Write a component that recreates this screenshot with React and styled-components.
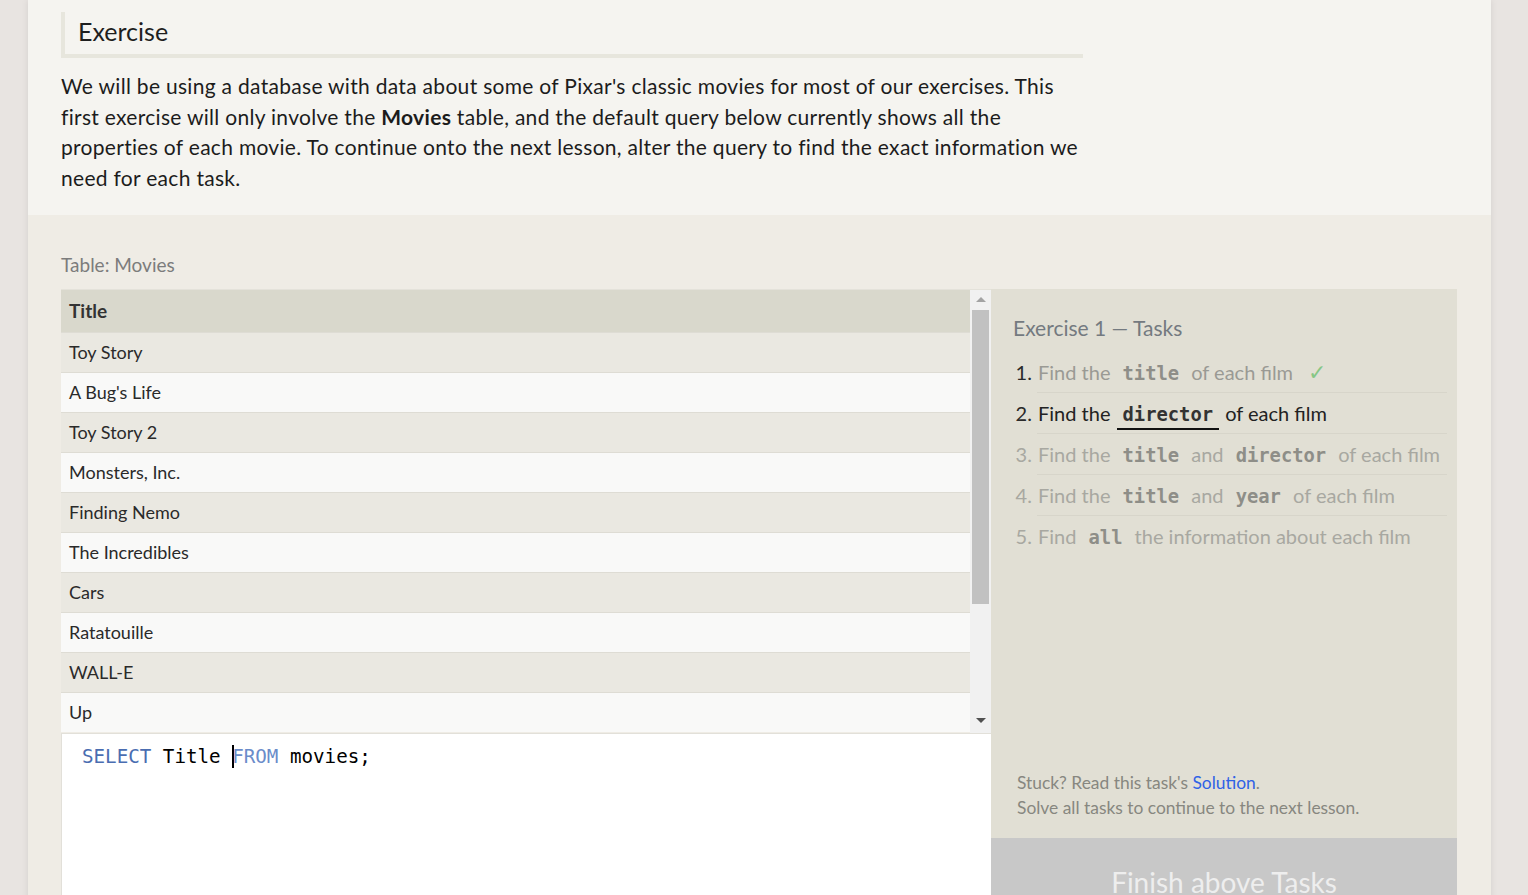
import React from 'react';
import styled, { createGlobalStyle } from 'styled-components';

const Global = createGlobalStyle`
  html, body {
    margin: 0;
    padding: 0;
    background: #e8e4e1;
    font-family: Lato, "Noto Sans", sans-serif;
    color: #222;
  }
`;

const Page = styled.div`
  width: 1463px;
  margin-left: 28px;
  box-shadow: 0 0 7px rgba(0, 0, 0, 0.09);
`;

const Intro = styled.section`
  background: #f5f4f0;
  padding: 12px 33px 21px;
`;

const Heading = styled.h2`
  margin: 0;
  width: 1005px;
  height: 42px;
  padding-left: 13px;
  border-left: 4px solid #e7e6dd;
  border-bottom: 4px solid #e7e6dd;
  font-size: 25px;
  font-weight: 400;
  line-height: 38px;
  color: #1e1e1e;
`;

const Lead = styled.p`
  margin: 13px 0 0;
  width: 1022px;
  font-size: 21px;
  letter-spacing: 0.3px;
  line-height: 30.7px;
  color: #1c1c1c;

  b {
    font-weight: 700;
  }
`;

const Work = styled.section`
  background: #efece5;
  padding: 39px 33px 0;
`;

const TableLabel = styled.div`
  font-size: 19px;
  line-height: 22px;
  color: #7c7c7c;
  margin-bottom: 13px;
`;

const Split = styled.div`
  display: flex;
  align-items: stretch;
`;

const LeftCol = styled.div`
  width: 930px;
  display: flex;
  flex-direction: column;
`;

const TableWrap = styled.div`
  display: flex;
  height: 443px;
  border-top: 1px solid #e4e2da;
`;

const Table = styled.div`
  flex: 1;
  overflow: hidden;
`;

const HeadRow = styled.div`
  height: 42px;
  display: flex;
  align-items: center;
  padding-left: 8px;
  background: #d9d8cc;
  font-size: 19px;
  font-weight: 700;
  color: #333;
`;

const Row = styled.div`
  height: 39px;
  display: flex;
  align-items: center;
  padding-left: 8px;
  border-top: 1px solid #dedcd4;
  background: ${({ odd }) => (odd ? '#eae8e1' : '#f9f9f8')};
  font-size: 18px;
  color: #2a2a2a;
`;

const Scrollbar = styled.div`
  width: 21px;
  background: #f1f1f1;
  display: flex;
  flex-direction: column;
  align-items: center;
`;

const Arrow = styled.div`
  width: 0;
  height: 0;
  margin: ${({ down }) => (down ? 'auto 0 10px' : '7px 0 8px')};
  border-left: 5px solid transparent;
  border-right: 5px solid transparent;
  ${({ down }) => (down ? 'border-top: 5px solid #505050;' : 'border-bottom: 5px solid #a3a3a3;')}
`;

const Thumb = styled.div`
  width: 17px;
  height: 294px;
  background: #c1c1c1;
`;

const Editor = styled.div`
  box-sizing: border-box;
  height: 193px;
  background: #fff;
  border-top: 1px solid #e2e0d9;
  border-left: 1px solid #e2e0d9;
  padding: 11px 20px;
  font-family: "DejaVu Sans Mono", "Liberation Mono", monospace;
  font-size: 19.2px;
  line-height: 24px;
  color: #000;
  white-space: pre;
`;

const Keyword = styled.span`
  color: ${({ light }) => (light ? '#6a8cca' : '#4a6db1')};
`;

const Caret = styled.span`
  display: inline-block;
  width: 2px;
  height: 23px;
  background: #000;
  margin-right: -2px;
  vertical-align: top;
`;

const Tasks = styled.aside`
  width: 466px;
  background: #e1dfd4;
  display: flex;
  flex-direction: column;
`;

const TasksTitle = styled.h3`
  margin: 0;
  padding: 27px 22px 0;
  font-size: 21px;
  font-weight: 400;
  line-height: 24px;
  color: #747a80;
`;

const TaskList = styled.ol`
  margin: 12px 10px 0 46px;
  padding: 0;
`;

const Task = styled.li`
  height: 40px;
  line-height: 40px;
  padding-left: 1px;
  border-bottom: 1px solid ${({ last }) => (last ? 'transparent' : '#d7d5ca')};
  font-size: 20px;
  color: ${({ state }) => (state === 'active' ? '#222' : state === 'done' ? '#9a9a94' : '#a8a8a1')};

  &::marker {
    color: ${({ state }) => (state === 'pending' ? '#a8a8a1' : '#2a2a2a')};
  }
`;

const Code = styled.code`
  font-family: "DejaVu Sans Mono", "Liberation Mono", monospace;
  font-weight: 700;
  font-size: 18.8px;
  padding: 0 6px 3px;
  margin: 0 1px;
  color: ${({ active }) => (active ? '#333' : '#8e8e88')};
  border-bottom: 2px solid ${({ active }) => (active ? '#111' : 'transparent')};
`;

const Check = styled.span`
  color: #86c786;
  font-size: 22px;
  margin-left: 10px;
`;

const Help = styled.div`
  margin-top: auto;
  padding: 0 26px 18px;
  font-size: 17.4px;
  line-height: 25px;
  color: #878780;

  a {
    color: #2f62e6;
    text-decoration: none;
  }
`;

const Finish = styled.div`
  height: 88px;
  background: #c8c8c8;
  color: #eeeeee;
  font-size: 28px;
  line-height: 88px;
  text-align: center;
`;

const movies = [
  'Toy Story', "A Bug's Life", 'Toy Story 2', 'Monsters, Inc.', 'Finding Nemo',
  'The Incredibles', 'Cars', 'Ratatouille', 'WALL-E', 'Up',
];

export default function App() {
  return (
    <>
      <Global />
      <Page>
        <Intro>
          <Heading>Exercise</Heading>
          <Lead>
            We will be using a database with data about some of Pixar's classic movies for most of our exercises. This
            first exercise will only involve the <b>Movies</b> table, and the default query below currently shows all the
            properties of each movie. To continue onto the next lesson, alter the query to find the exact information we
            need for each task.
          </Lead>
        </Intro>
        <Work>
          <TableLabel>Table: Movies</TableLabel>
          <Split>
            <LeftCol>
              <TableWrap>
                <Table>
                  <HeadRow>Title</HeadRow>
                  {movies.map((m, i) => (
                    <Row key={m} odd={i % 2 === 0}>{m}</Row>
                  ))}
                </Table>
                <Scrollbar>
                  <Arrow />
                  <Thumb />
                  <Arrow down />
                </Scrollbar>
              </TableWrap>
              <Editor>
                <Keyword>SELECT</Keyword> Title <Caret /><Keyword light>FROM</Keyword> movies;
              </Editor>
            </LeftCol>
            <Tasks>
              <TasksTitle>Exercise 1 — Tasks</TasksTitle>
              <TaskList>
                <Task state="done">
                  Find the <Code>title</Code> of each film <Check>✓</Check>
                </Task>
                <Task state="active">
                  Find the <Code active>director</Code> of each film
                </Task>
                <Task state="pending">
                  Find the <Code>title</Code> and <Code>director</Code> of each film
                </Task>
                <Task state="pending">
                  Find the <Code>title</Code> and <Code>year</Code> of each film
                </Task>
                <Task state="pending" last>
                  Find <Code>all</Code> the information about each film
                </Task>
              </TaskList>
              <Help>
                Stuck? Read this task's <a href="#solution">Solution</a>.
                <br />
                Solve all tasks to continue to the next lesson.
              </Help>
              <Finish>Finish above Tasks</Finish>
            </Tasks>
          </Split>
        </Work>
      </Page>
    </>
  );
}
